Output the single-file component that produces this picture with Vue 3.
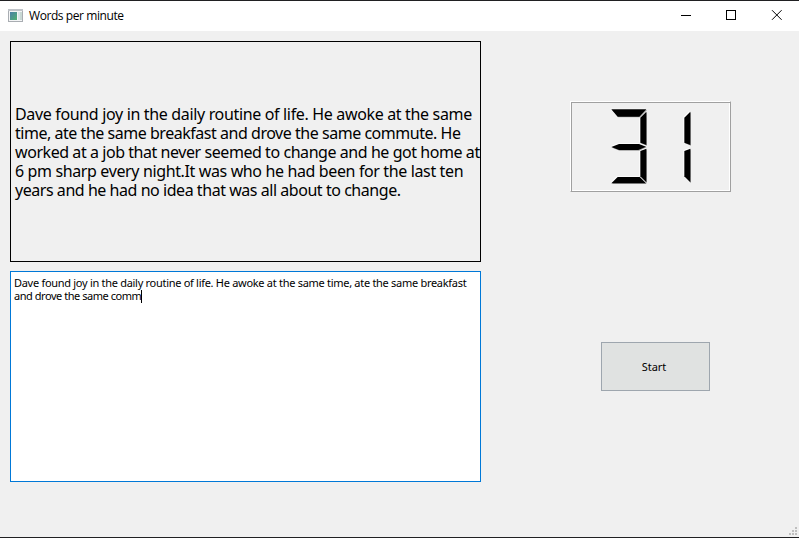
<script setup>
import { ref } from 'vue'

const prompt = ref([
  { text: 'Dave found joy in the daily routine of life. He awoke at the same', tracking: -0.34 },
  { text: 'time, ate the same breakfast and drove the same commute. He', tracking: -0.47 },
  { text: 'worked at a job that never seemed to change and he got home at', tracking: -0.44 },
  { text: '6 pm sharp every night.It was who he had been for the last ten', tracking: -0.37 },
  { text: 'years and he had no idea that was all about to change.', tracking: -0.455 }
])
const typed = ref([
  'Dave found joy in the daily routine of life. He awoke at the same time, ate the same breakfast',
  'and drove the same comm'
])
</script>

<template>
  <div class="window">
    <header class="titlebar">
      <svg class="app-icon" width="16" height="14" viewBox="0 0 16 14">
        <defs>
          <linearGradient id="pane" x1="0" y1="0" x2="1" y2="1">
            <stop offset="0" stop-color="#4a80a8" />
            <stop offset="1" stop-color="#50b070" />
          </linearGradient>
        </defs>
        <rect x=".5" y=".5" width="14" height="12" fill="#f4f5f6" stroke="#a9adb2" />
        <path d="M0 1h15" stroke="#bfc3c8" stroke-width="2" />
        <rect x="2" y="3" width="7" height="8" fill="url(#pane)" />
        <rect x="10" y="3" width="2" height="8" fill="#d9e6e8" />
        <rect x="12" y="3" width="2" height="8" fill="#c8d8d4" />
      </svg>
      <span class="title">Words per minute</span>
      <svg class="controls" width="138" height="30" viewBox="0 0 138 30" fill="none" stroke="#000">
        <path d="M20 14.5h10" />
        <rect x="65.5" y="9.5" width="9" height="9" />
        <path d="M111 9.2l9.6 9.6M120.6 9.2l-9.6 9.6" />
      </svg>
    </header>

    <main class="content">
      <section class="texts">
        <div class="prompt">
          <div
            v-for="line in prompt"
            :key="line.text"
            class="prompt-line"
            :style="{ letterSpacing: line.tracking + 'px' }"
          >{{ line.text }}</div>
        </div>
        <div class="editor">
          <div class="typed-line">{{ typed[0] }}</div>
          <div class="typed-line second"><span>{{ typed[1] }}</span><i class="caret"></i></div>
        </div>
      </section>

      <section class="side">
        <div class="lcd">
          <svg class="digits" width="159" height="89" viewBox="18 21 477 267">
            <g v-for="pass in ['light', 'dark', 'face']" :key="pass" :class="pass">
              <path d="M139 43H244L223 65H158Z" />
              <path d="M244 50V150L226 143V68Z" />
              <path d="M139 156L162 147H222L243 155L220 165H162Z" />
              <path d="M244 161V262L226 244V168Z" />
              <path d="M139 265L158 246H224L243 265Z" />
              <path d="M376 50V150L358 143V68Z" />
              <path d="M376 161V262L358 244V168Z" />
            </g>
          </svg>
        </div>
        <button class="start">Start</button>
      </section>
    </main>

    <svg class="grip" width="8" height="8" viewBox="0 0 8 8" fill="#bfbfbf">
      <path d="M6 0h2v2H6zM3 3h2v2H3zM6 3h2v2H6zM0 6h2v2H0zM3 6h2v2H3zM6 6h2v2H6z" />
    </svg>
  </div>
</template>

<style>
body { margin: 0; overflow: hidden; }
</style>

<style scoped>
* { box-sizing: border-box; }
.window {
  position: relative;
  width: 799px;
  height: 538px;
  background: #f0f0f0;
  border-top: 1px solid #202022;
  border-bottom: 1px solid #202022;
  color: #000;
  font-family: "Noto Sans", "Open Sans", sans-serif;
}
.titlebar {
  height: 30px;
  background: #fff;
  display: flex;
  align-items: center;
  padding-left: 8px;
}
.title {
  margin-left: 5px;
  font: 12px/16px "Open Sans", "Noto Sans", sans-serif;
  letter-spacing: -0.42px;
  white-space: nowrap;
}
.controls { margin-left: auto; }
.content { display: flex; padding: 10px; }
.texts { width: 471px; display: flex; flex-direction: column; gap: 9px; }
.prompt {
  height: 221px;
  border: 1px solid #000;
  padding: 2px 0 0 4px;
  display: flex;
  flex-direction: column;
  justify-content: center;
}
.prompt-line {
  font-size: 16px;
  line-height: 19px;
  white-space: nowrap;
}
.editor {
  height: 211px;
  background: #fff;
  border: 1px solid #0078d7;
  padding: 4px 3px;
}
.typed-line {
  height: 13px;
  font-size: 11px;
  line-height: 13px;
  letter-spacing: -0.29px;
  white-space: nowrap;
}
.second { display: flex; letter-spacing: -0.46px; }
.caret { width: 1px; height: 13px; margin-top: 1px; background: #000; }
.side {
  flex: 1;
  display: flex;
  flex-direction: column;
  padding-left: 89px;
}
.lcd {
  width: 161px;
  height: 91px;
  margin-top: 60px;
  border: 1px solid;
  border-color: #fff #a0a0a0 #a0a0a0 #fff;
  box-shadow: inset 1px 1px #a0a0a0, inset -1px -1px #fff;
}
.digits { display: block; }
.light { fill: #fff; transform: translate(-3px, -2px); }
.dark { fill: #a0a0a0; transform: translate(2px, 2px); }
.face { fill: #000; }
.start {
  width: 109px;
  height: 49px;
  margin: 150px 0 0 31px;
  padding: 0 3px 0 0;
  border: 1px solid #9ea6ae;
  background: #e0e2e1;
  color: #000;
  font: inherit;
  font-size: 11px;
}
.grip { position: absolute; right: 2px; bottom: 2px; }
</style>
